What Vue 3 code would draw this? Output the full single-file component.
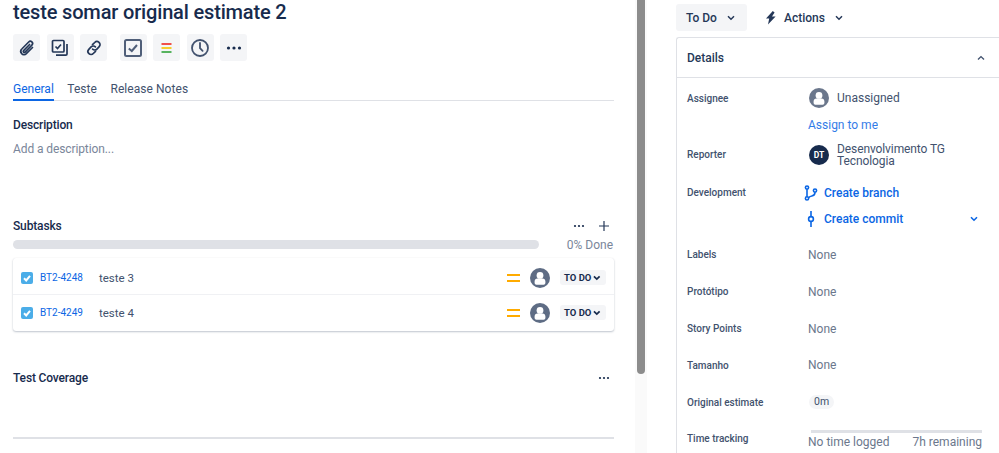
<script setup>
const subtasks = [
  { key: 'BT2-4248', name: 'teste 3' },
  { key: 'BT2-4249', name: 'teste 4' },
]
const fields = [
  { label: 'Labels', value: 'None' },
  { label: 'Protótipo', value: 'None' },
  { label: 'Story Points', value: 'None' },
  { label: 'Tamanho', value: 'None' },
]
</script>

<template>
  <div class="page">
    <main class="left">
      <h1 class="title">teste somar original estimate 2</h1>
      <div class="toolbar">
        <button class="tool">
          <svg viewBox="0 0 20 20" width="20" height="20" fill="none" stroke="#253858" stroke-width="1.7" stroke-linecap="round"><path d="M15.5 9.5 9.3 15.7a3 3 0 0 1-4.7-.3 3.2 3.2 0 0 1 .2-4.4l6.9-7a2.2 2.2 0 0 1 3.2 3.1l-6.8 7a1 1 0 0 1-1.5-1.5l6-6.1"/></svg>
        </button>
        <button class="tool">
          <svg viewBox="0 0 20 20" width="20" height="20" fill="none" stroke="#253858" stroke-width="1.7"><rect x="2.5" y="2.5" width="11.5" height="11.5" rx="1"/><path d="M5.5 8.5 7.5 10.5 11 6.5"/><path d="M17 6v10a1.2 1.2 0 0 1-1.2 1.2H6"/></svg>
        </button>
        <button class="tool">
          <svg viewBox="0 0 20 20" width="20" height="20" fill="none" stroke="#253858" stroke-width="1.7" stroke-linecap="round"><path d="M8.5 6.7 10.7 4.5a3 3 0 0 1 4.5 4.2l-2.3 2.4a3 3 0 0 1-4.3 0"/><path d="M11.5 13.3 9.3 15.5a3 3 0 0 1-4.5-4.2l2.3-2.4a3 3 0 0 1 4.3 0"/></svg>
        </button>
        <button class="tool gap-left">
          <svg viewBox="0 0 20 20" width="20" height="20" fill="none" stroke="#505f79" stroke-width="2"><rect x="2" y="2" width="16" height="16" rx="1.5"/><path d="M5.8 10.5 8.8 13l5.2-6" stroke-width="2"/></svg>
        </button>
        <button class="tool">
          <svg viewBox="0 0 20 20" width="20" height="20"><rect x="4.5" y="5" width="10" height="2" fill="#f0504a"/><rect x="4.5" y="9" width="10" height="2" fill="#f5cd2e"/><rect x="4.5" y="13" width="10" height="2" fill="#57b35f"/></svg>
        </button>
        <button class="tool">
          <svg viewBox="0 0 20 20" width="20" height="20" fill="none" stroke="#42526e" stroke-width="1.8" stroke-linecap="round"><circle cx="10" cy="10" r="8"/><path d="M10 5v5.2l2.6 2.6"/></svg>
        </button>
        <button class="tool">
          <svg viewBox="0 0 20 20" width="20" height="20" fill="#172b4d"><circle cx="4.5" cy="10" r="1.6"/><circle cx="10" cy="10" r="1.6"/><circle cx="15.5" cy="10" r="1.6"/></svg>
        </button>
      </div>

      <nav class="tabs">
        <span class="tab active">General</span>
        <span class="tab">Teste</span>
        <span class="tab">Release Notes</span>
      </nav>

      <h2 class="heading desc-heading">Description</h2>
      <p class="placeholder">Add a description...</p>

      <section class="subtasks">
        <header class="section-head">
          <h2 class="heading">Subtasks</h2>
          <div class="section-actions">
            <svg viewBox="0 0 12 4" width="12" height="4" fill="#172b4d"><circle cx="2" cy="2" r="1.1"/><circle cx="6" cy="2" r="1.1"/><circle cx="10" cy="2" r="1.1"/></svg>
            <svg viewBox="0 0 12 12" width="12" height="12" fill="none" stroke="#253858" stroke-width="1.2"><path d="M6 1v10M1 6h10"/></svg>
          </div>
        </header>
        <div class="progress">
          <div class="bar"></div>
          <span class="done">0% Done</span>
        </div>
        <div class="card">
          <div v-for="t in subtasks" :key="t.key" class="row">
            <span class="check">
              <svg viewBox="0 0 12 12" width="12" height="12" fill="none" stroke="#fff" stroke-width="2"><path d="M3 6.2 5.2 8.4 9 3.8"/></svg>
            </span>
            <a class="key">{{ t.key }}</a>
            <span class="name">{{ t.name }}</span>
            <span class="prio"><i></i><i></i></span>
            <svg class="avatar" viewBox="0 0 20 20" width="20" height="20"><circle cx="10" cy="10" r="10" fill="#5e6c84"/><circle cx="10" cy="7.4" r="3.4" fill="#fff"/><path d="M4.6 15v-1.6c0-1.6 1.2-2.9 2.8-2.9h5.2c1.6 0 2.8 1.3 2.8 2.9V15a1.8 1.8 0 0 1-1.8 1.8H6.4A1.8 1.8 0 0 1 4.6 15z" fill="#fff"/></svg>
            <span class="status">TO DO
              <svg viewBox="0 0 8 6" width="8" height="6" fill="none" stroke="#172b4d" stroke-width="1.8"><path d="M1 1.2 4 4.2 7 1.2"/></svg>
            </span>
          </div>
        </div>
      </section>

      <header class="section-head coverage">
        <h2 class="heading">Test Coverage</h2>
        <svg viewBox="0 0 12 4" width="12" height="4" fill="#172b4d"><circle cx="2" cy="2" r="1.1"/><circle cx="6" cy="2" r="1.1"/><circle cx="10" cy="2" r="1.1"/></svg>
      </header>
      <hr class="rule" />
    </main>

    <div class="track"><div class="thumb"></div></div>

    <aside class="right">
      <div class="status-bar">
        <button class="todo">To Do
          <svg viewBox="0 0 8 6" width="8" height="6" fill="none" stroke="#253858" stroke-width="1.5"><path d="M1 1.2 4 4.2 7 1.2"/></svg>
        </button>
        <button class="actions">
          <svg viewBox="0 0 12 14" width="12" height="14" fill="#253858"><path d="M7.8 0 1 7.6h3.2L3 13.6 10.6 5.6H7L9.6 1.6z"/></svg>
          <span class="actions-text">Actions</span>
          <svg viewBox="0 0 8 6" width="8" height="6" fill="none" stroke="#253858" stroke-width="1.5"><path d="M1 1.2 4 4.2 7 1.2"/></svg>
        </button>
      </div>

      <section class="panel">
        <header class="panel-head">
          <span>Details</span>
          <svg viewBox="0 0 8 6" width="8" height="6" fill="none" stroke="#42526e" stroke-width="1.4"><path d="M1 4.5 4 1.6 7 4.5"/></svg>
        </header>
        <div class="details">
          <div class="f-row r-assignee">
            <span class="label">Assignee</span>
            <div class="value person">
              <svg viewBox="0 0 20 20" width="20" height="20"><circle cx="10" cy="10" r="10" fill="#6b778c"/><circle cx="10" cy="7.4" r="3.4" fill="#fff"/><path d="M4.6 15v-1.6c0-1.6 1.2-2.9 2.8-2.9h5.2c1.6 0 2.8 1.3 2.8 2.9V15a1.8 1.8 0 0 1-1.8 1.8H6.4A1.8 1.8 0 0 1 4.6 15z" fill="#fff"/></svg>
              <span>Unassigned</span>
            </div>
          </div>
          <div class="f-row r-assign"><span></span><a class="assign">Assign to me</a></div>
          <div class="f-row r-reporter">
            <span class="label">Reporter</span>
            <div class="value person">
              <span class="dt">DT</span>
              <span class="two-line">Desenvolvimento TG Tecnologia</span>
            </div>
          </div>
          <div class="f-row r-dev">
            <span class="label">Development</span>
            <a class="dev">
              <svg viewBox="0 0 14 16" width="14" height="16" fill="none" stroke="#0b66e4" stroke-width="1.6"><circle cx="3" cy="2.6" r="1.6"/><circle cx="3" cy="13.4" r="1.6"/><circle cx="11" cy="5.6" r="1.6"/><path d="M3 4.2v7.6"/><path d="M11 7.2c0 2.6-1.6 3.6-3.2 3.8C6 11.3 5 12 4.6 13"/></svg>
              Create branch
            </a>
          </div>
          <div class="f-row r-commit">
            <span></span>
            <a class="dev">
              <svg viewBox="0 0 14 16" width="14" height="16" fill="none" stroke="#0b66e4" stroke-width="1.6"><circle cx="7" cy="8" r="2.4"/><path d="M7 0v5.6M7 10.4V16"/></svg>
              Create commit
              <svg class="dev-chev" viewBox="0 0 8 6" width="8" height="6" fill="none" stroke="#0b66e4" stroke-width="1.6"><path d="M1 1.2 4 4.2 7 1.2"/></svg>
            </a>
          </div>
          <div v-for="f in fields" :key="f.label" class="f-row r-field">
            <span class="label">{{ f.label }}</span>
            <span class="none">{{ f.value }}</span>
          </div>
          <div class="f-row r-field">
            <span class="label">Original estimate</span>
            <span class="pill">0m</span>
          </div>
          <div class="f-row r-field">
            <span class="label">Time tracking</span>
            <div class="tracking">
              <div class="t-bar"></div>
              <div class="t-text"><span>No time logged</span><span>7h remaining</span></div>
            </div>
          </div>
        </div>
      </section>
    </aside>
  </div>
</template>

<style>
html, body { margin: 0; background: #fff; overflow: hidden; }
</style>

<style scoped>
.page {
  display: flex;
  width: 999px;
  height: 453px;
  overflow: hidden;
  font-family: Roboto, "Noto Sans", sans-serif;
  color: #172b4d;
  background: #fff;
}
button { font: inherit; border: 0; margin: 0; padding: 0; color: inherit; }
h1, h2, p { margin: 0; }

.left { width: 601px; margin-left: 13px; flex: none; margin-right: 21px; }
.title { font-size: 20px; line-height: 24px; font-weight: 500; white-space: nowrap; letter-spacing: -.16px; }
.toolbar { display: flex; gap: 6.5px; margin-top: 10px; }
.tool { width: 27px; height: 27px; background: #f4f5f7; border-radius: 3px; display: flex; align-items: center; justify-content: center; }
.gap-left { margin-left: 6px; }

.tabs { display: flex; gap: 13.5px; margin-top: 19px; border-bottom: 1px solid #dfe1e6; height: 20px; font-size: 12px; }
.tab { color: #42526e; line-height: 18px; height: 21px; box-sizing: border-box; font-weight: 400; letter-spacing: .05px; }
.tab.active { color: #0c66e4; border-bottom: 2px solid #0c66e4; letter-spacing: 0; }

.heading { font-size: 12px; font-weight: 500; line-height: 16px; color: #172b4d; letter-spacing: -.15px; }
.desc-heading { margin-top: 16px; }
.placeholder { font-size: 12px; line-height: 16px; color: #7a869a; margin-top: 8px; letter-spacing: -.1px; }

.subtasks { margin-top: 61px; }
.section-head { display: flex; justify-content: space-between; align-items: center; height: 16px; }
.section-actions { display: flex; align-items: center; gap: 13px; padding-right: 4px; }
.progress { display: flex; align-items: center; justify-content: space-between; height: 18px; margin-top: 1px; }
.bar { width: 526px; height: 9px; border-radius: 5px; background: #dfe1e6; }
.done { font-size: 12px; color: #7a869a; padding-right: 1px; margin-top: 2px; }

.card { margin-top: 5px; padding-top: 3px; box-sizing: border-box; border-radius: 3px; box-shadow: 0 1px 2px rgba(9, 30, 66, .25), 0 0 1px rgba(9, 30, 66, .08); height: 73px; display: flex; flex-direction: column; gap: 1px; }
.row { display: flex; align-items: center; height: 33px; padding: 0 8px; border-bottom: 1px solid #f0f1f4; }
.row:last-child { border-bottom: 0; }
.check { width: 12px; height: 12px; border-radius: 2px; background: #4bade8; display: flex; }
.key { font-size: 10px; color: #0c66e4; margin-left: 7px; width: 59px; }
.name { font-size: 11.5px; color: #42526e; flex: 1; }
.prio { display: flex; flex-direction: column; gap: 4px; width: 13px; margin-right: 10px; }
.prio i { display: block; height: 2px; background: #ffab00; }
.avatar { margin-right: 10px; }
.status { display: flex; align-items: center; gap: 2px; height: 15px; padding: 0 5px 0 4px; border-radius: 3px; background: #f4f5f7; font-size: 9.5px; font-weight: 700; color: #172b4d; width: 46px; box-sizing: border-box; white-space: nowrap; }

.coverage { margin-top: 39px; padding-right: 4px; }
.rule { border: 0; height: 2px; background: #dfe1e6; margin: 51px 0 0; }

.track { width: 12px; flex: none; background: #fafafa; height: 453px; }
.thumb { width: 8px; height: 374px; margin-left: 2px; border-radius: 0 0 4px 4px; background: #8c8c8c; }

.right { width: 323px; flex: none; margin-left: 29px; }
.status-bar { display: flex; align-items: center; padding-top: 4px; height: 27px; gap: 18px; }
.todo { height: 27px; width: 71px; background: #f4f5f7; border-radius: 3px; font-size: 12px; font-weight: 500; color: #253858; display: flex; align-items: center; gap: 10px; padding-left: 10px; box-sizing: border-box; }
.actions { background: none; font-size: 12px; font-weight: 500; color: #253858; display: flex; align-items: center; gap: 7px; }
.actions-text { margin-right: 3px; }
.panel { margin-top: 6px; border: 1px solid #dfe1e6; border-right: 0; border-bottom: 0; border-radius: 3px 0 0 0; }
.panel-head { display: flex; justify-content: space-between; align-items: center; height: 39px; padding: 0 14px 0 10px; border-bottom: 1px solid #dfe1e6; font-size: 12px; font-weight: 500; color: #253858; }
.details { padding: 0 0 0 10px; }
.f-row { display: grid; grid-template-columns: 121px 1fr; align-items: center; }
.r-assignee { height: 40px; }
.r-assign { height: 11px; }
.r-reporter { height: 51px; }
.r-dev { height: 25px; }
.r-commit { height: 28px; margin-bottom: 3.6px; }
.r-field { height: 36.8px; }
.label { font-size: 10px; font-weight: 500; color: #42526e; white-space: nowrap; }
.value { font-size: 12px; color: #42526e; }
.person { display: flex; align-items: center; gap: 8px; padding-left: 1px; }
.assign { font-size: 12px; color: #0c66e4; opacity: .85; }
.dt { width: 20px; height: 20px; border-radius: 50%; background: #172b4d; color: #fff; font-size: 8.5px; font-weight: 700; display: flex; align-items: center; justify-content: center; flex: none; }
.two-line { line-height: 12px; width: 130px; letter-spacing: -.1px; }
.dev { display: flex; align-items: center; gap: 6px; margin-left: -4px; font-size: 12px; font-weight: 500; color: #0b66e4; }
.dev-chev { margin-left: auto; margin-right: 21px; }
.none { font-size: 12px; color: #6b778c; }
.pill { justify-self: start; margin-left: 1px; padding: 0 5px; height: 14px; line-height: 14px; border-radius: 7px; background: #f4f5f7; font-size: 10.5px; color: #42526e; }
.tracking { display: flex; flex-direction: column; margin-top: 3px; width: 174px; }
.t-bar { height: 3px; margin-left: 3px; background: #dfe1e6; }
.t-text { display: flex; justify-content: space-between; font-size: 12px; line-height: 16px; color: #6b778c; margin-top: 1px; }
</style>
